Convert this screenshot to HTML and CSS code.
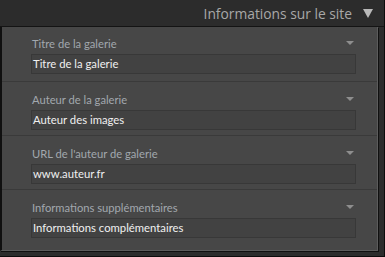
FILE: index.html
```html
<!DOCTYPE html>
<html lang="fr">
<head>
    <meta charset="UTF-8">
    <title>Informations sur le site</title>
    <link rel="stylesheet" href="styles.css">
</head>
<body>
    <div class="window">
        <div class="header">
            <span class="header-title">Informations sur le site</span>
            <span class="header-arrow"></span>
        </div>

        <div class="panel">
            <div class="field">
                <div class="field-head">
                    <label>Titre de la galerie</label>
                    <span class="mini-arrow"></span>
                </div>
                <div class="field-input">Titre de la galerie</div>
            </div>

            <div class="field">
                <div class="field-head">
                    <label>Auteur de la galerie</label>
                    <span class="mini-arrow"></span>
                </div>
                <div class="field-input">Auteur des images</div>
            </div>

            <div class="field">
                <div class="field-head">
                    <label>URL de l'auteur de galerie</label>
                    <span class="mini-arrow"></span>
                </div>
                <div class="field-input">www.auteur.fr</div>
            </div>

            <div class="field last">
                <div class="field-head">
                    <label>Informations supplémentaires</label>
                    <span class="mini-arrow"></span>
                </div>
                <div class="field-input">Informations complémentaires</div>
            </div>
        </div>
    </div>
</body>
</html>
```

FILE: styles.css
```css
body {
    margin: 0;
    font-family: "Open Sans", "Noto Sans", sans-serif;
    background: #2c2c2c;
}

.window {
    width: 385px;
    height: 257px;
    box-sizing: border-box;
    background: #2c2c2c;
    border-right: 1px solid #0c0c0c;
    border-bottom: 1px solid #0c0c0c;
    overflow: hidden;
}

.header {
    height: 26px;
    display: flex;
    align-items: center;
    justify-content: flex-end;
    padding-right: 11px;
    gap: 11px;
    border-bottom: 1px solid #141414;
}

.header-title {
    font-size: 13.8px;
    color: #a8a8a8;
}

.header-arrow {
    width: 0;
    height: 0;
    border-left: 5px solid transparent;
    border-right: 5px solid transparent;
    border-top: 9px solid #b9b9b9;
    margin-top: 1px;
}

.panel {
    height: 224px;
    box-sizing: border-box;
    margin-right: 6px;
    border-left: 2px solid #101010;
    border-right: 1px solid #5c5c5c;
    border-bottom: 1px solid #5c5c5c;
    box-shadow: 1px 1px 0 #101010;
    background: #474747;
}

.field {
    height: 54px;
    box-sizing: border-box;
    padding: 10px 21px 0 29px;
    border-bottom: 1px solid #3a3a3a;
    font-family: Lato, "Open Sans", sans-serif;
}

.field:first-child {
    height: 55px;
    padding-top: 9px;
}

.field.last {
    border-bottom: none;
}

.field-head {
    display: flex;
    align-items: center;
    justify-content: space-between;
    height: 14px;
    margin-bottom: 4px;
}

.field-head label {
    font-size: 11.2px;
    color: #a2a8ae;
    padding-left: 1px;
}

.mini-arrow {
    width: 0;
    height: 0;
    border-left: 4px solid transparent;
    border-right: 4px solid transparent;
    border-top: 4px solid #8e8e8e;
    margin-right: 2px;
}

.field-input {
    height: 20px;
    box-sizing: border-box;
    border: 1px solid #383838;
    background: #424242;
    color: #f0f0f0;
    font-size: 11.3px;
    line-height: 18px;
    padding-left: 1px;
}
```
